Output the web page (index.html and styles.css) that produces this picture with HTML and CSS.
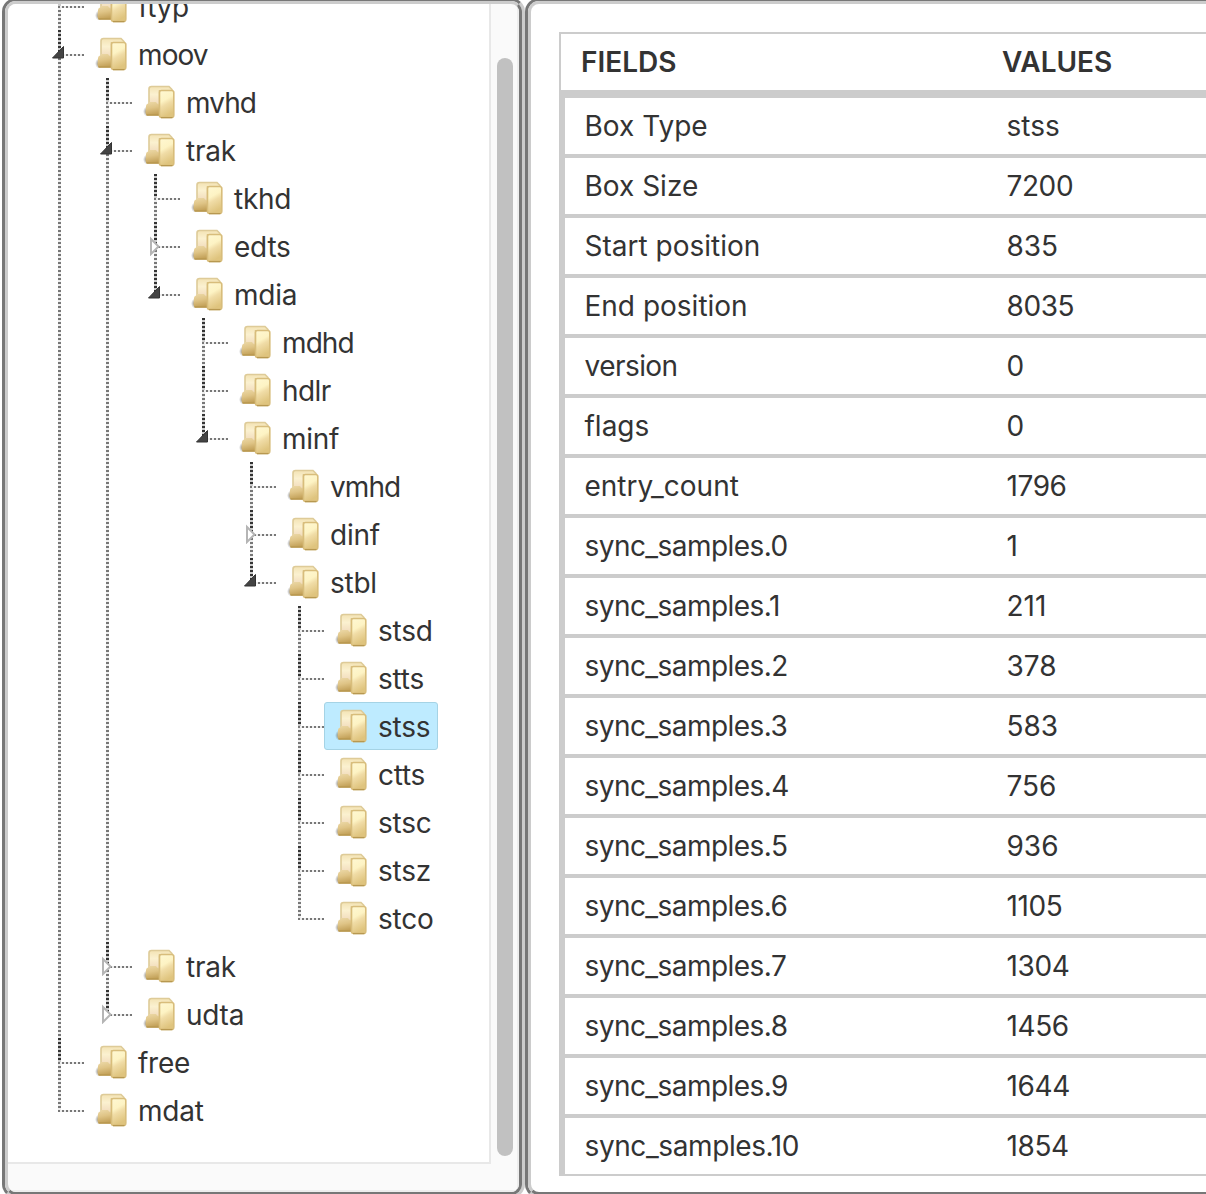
FILE: index.html
```
<!DOCTYPE html>
<html lang="en"><head><meta charset="utf-8"><title>MP4 Box Viewer</title><link rel="stylesheet" href="styles.css"></head>
<body>
<main class="viewer">
<section class="panel tree-panel"><div class="panel-inner tree-inner">
<nav class="tree-view"><ul class="tree" id="tree"></ul></nav>
<div class="scroll-track"><div class="scroll-thumb"></div></div>
<div class="scroll-bottom"></div>
</div></section>
<section class="panel detail-panel"><div class="panel-inner detail-inner">
<table class="fields"><thead><tr><th>FIELDS</th><th>VALUES</th></tr></thead><tbody id="rows"></tbody></table>
</div></section>
</main>
<svg width="0" height="0" class="defs"><defs>
<linearGradient id="gBack" x1="0" y1="0" x2="0" y2="1"><stop offset="0" stop-color="#f3e3b4"/><stop offset=".3" stop-color="#fbf1d0"/><stop offset=".6" stop-color="#f3dfc0"/><stop offset="1" stop-color="#d9bb76"/></linearGradient>
<linearGradient id="gFront" x1="0" y1="0" x2=".3" y2="1"><stop offset="0" stop-color="#fff8d2"/><stop offset=".42" stop-color="#fdf3c4"/><stop offset=".6" stop-color="#f0dca6"/><stop offset="1" stop-color="#dfc47e"/></linearGradient>
<linearGradient id="gTab" x1="0" y1="0" x2=".2" y2="1"><stop offset="0" stop-color="#ecd9a8"/><stop offset=".5" stop-color="#dfc486"/><stop offset="1" stop-color="#c3a159"/></linearGradient>
<radialGradient id="gShade"><stop offset="0" stop-color="#555" stop-opacity=".75"/><stop offset="1" stop-color="#555" stop-opacity="0"/></radialGradient>
<symbol id="folder" viewBox="0 0 34 34"><ellipse cx="4" cy="26.500" rx="4" ry="5" fill="url(#gShade)"/>
<path d="M6 4Q6 1.500 8.500 1.500H26L29 4.500V28H6Z" fill="url(#gBack)" stroke="#decb98" stroke-width="1.600"/>
<path d="M16.500 5V28" stroke="#d9c386" stroke-width="1.500"/>
<path d="M3 21Q3 19 5 18.500L6.500 17H13L14 18.500Q16.500 19 16.500 21V30.500H5Q2.500 30 2.500 27.500Z" fill="url(#gTab)"/>
<path d="M3.500 30H16" stroke="#b9984f" stroke-width="1.500"/>
<path d="M16.500 7.500Q16.500 5.500 18.500 5.500H28.500Q30.800 5.500 30.800 7.500V30Q30.800 32.500 28.500 32.500H18.500Q16.500 32.500 16.500 30.500Z" fill="url(#gFront)" stroke="#d8bd7b" stroke-width="1.600"/>
<path d="M18 32.600H29.500" stroke="#b79850" stroke-width="1.300"/></symbol>
</defs></svg>
<script src="app.js"></script>
</body></html>
```
FILE: styles.css
```
*{box-sizing:border-box}
body{margin:0;background:#fff;color:#333;font:28px/48px Inter,"Liberation Sans",sans-serif;overflow:hidden}
.viewer{display:flex;width:1250px;height:1200px;margin:-2px 0 0 2px}
.panel{border:3px solid;border-color:#777 #ccc #ccc #777;border-radius:14px;height:1200px}
.panel-inner{border:3px solid;border-color:#ccc #777 #777 #ccc;border-radius:11px;height:1194px;overflow:hidden}
.tree-panel{width:523px;flex:none}
.detail-panel{flex:1}
.tree-inner{display:grid;grid-template:1160px 28px/483px 28px;background:#fafafa}
.tree-view{background:#fff;border-right:2px solid #e8e8e8;border-bottom:2px solid #e8e8e8;overflow:hidden;padding-left:28px}
.tree{margin:-22px 0 0}
.tree,.tree ul{list-style:none;padding:0}
.tree ul{margin:0}
.tree li{padding-left:48px;position:relative}
.node{display:flex;height:48px;width:max-content;align-items:center;padding:1px 7px 0 10px;border:1px solid transparent;border-radius:3px;letter-spacing:-.25px}
.selected{background:#beebff;border-color:#a5d3e5}
.wide{letter-spacing:-.9px}
.snug{letter-spacing:-.55px}
.close{letter-spacing:-.4px}
.folder{width:34px;height:34px;margin:-1px 9px 0 0;flex:none}
.line-v{position:absolute;left:22px;top:0;width:2.500px;height:100%;background:repeating-linear-gradient(#777 0 2px,#eee 2px 4px)}
.line-v::before{content:"";display:block;height:24px;background:repeating-linear-gradient(#333 0 2px,#ccc 2px 4px)}
.line-v.last{height:26px}
.line-v.last::before{display:none}
.line-v.chain::before{display:block}
.line-h{position:absolute;left:24px;top:24px;width:24px;height:2px;background:repeating-linear-gradient(90deg,#eee 0 2px,#777 2px 4px)}
.arrow{position:absolute;left:15px;top:14px;width:16px;height:20px}
.scroll-track{border-right:2px solid #eee;padding:54px 0 0 6px}
.scroll-thumb{width:16px;height:1098px;border-radius:8px;background:#c1c1c1}
.scroll-bottom{grid-column:1/3;border-right:2px solid #eee;border-bottom:2px solid #eee}
.detail-inner{padding:28px 0 0 28px}
.fields{width:680px;border-collapse:separate;border-spacing:0;border:2px solid #ccc;table-layout:fixed;line-height:56px}
.fields th{height:56px;padding:0 0 0 20px;text-align:left;font-weight:600}
.fields th:first-child{width:421px}
.fields td{height:60px;padding:1px 0 0 24.500px;border-top:4px solid #ccc;line-height:55px}
.fields td:first-child{padding-left:19.500px;border-left:4px solid #ccc}
.fields tr:first-child td{border-top-width:8px;height:64px}
.defs{position:absolute}
```
FILE: app.js
```
const nodes = [['ftyp'],['moov',[['mvhd'],['trak',[['tkhd'],['edts',[]],['mdia',[['mdhd'],['hdlr'],['minf',[['vmhd'],['dinf',[]],['stbl',[['stsd'],['stts'],['stss'],['ctts'],['stsc'],['stsz'],['stco']]]]]]]]],['trak',[]],['udta',[]]]],['free'],['mdat']];
const spacing = { mvhd: 'wide', vmhd: 'wide', moov: 'wide', mdhd: 'wide', hdlr: 'snug', version: 'snug' };
const arrow = open => open
  ? '<svg class="arrow" viewBox="0 0 16 20"><path d="M1.500 14H12.500V2.500Z" fill="#444" stroke="#333"/></svg>'
  : '<svg class="arrow" viewBox="0 0 16 20"><path d="M4 3V18L11.500 10.500Z" fill="#fff" stroke="#b5b5b5" stroke-width="2"/></svg>';
const build = list => list.map(([name, kids], i) => `<li><span class="line-v${i === list.length - 1 ? ' last' : ''}${kids && i === list.length - 1 ? ' chain' : ''}"></span><span class="line-h"></span>${kids ? arrow(kids.length) : ''}<div class="node${name === 'stss' ? ' selected' : ''}"><svg class="folder"><use href="#folder"/></svg><span class="${spacing[name] || ''}">${name}</span></div>${kids && kids.length ? `<ul>${build(kids)}</ul>` : ''}</li>`).join('');
document.getElementById('tree').innerHTML = build(nodes);
const rows = [['Box Type','stss'],['Box Size',7200],['Start position',835],['End position',8035],['version',0],['flags',0],['entry_count',1796]];
[1,211,378,583,756,936,1105,1304,1456,1644,1854].forEach((v, i) => rows.push(['sync_samples.' + i, v]));
const keyClass = k => k === 'sync_samples.10' ? 'close' : k.startsWith('sync') || k === 'version' ? 'snug' : '';
document.getElementById('rows').innerHTML = rows.map(([k, v]) => `<tr><td class="${keyClass(k)}">${k}</td><td class="${String(v).length > 3 && v !== 'stss' ? 'close' : ''}">${v}</td></tr>`).join('');
```
